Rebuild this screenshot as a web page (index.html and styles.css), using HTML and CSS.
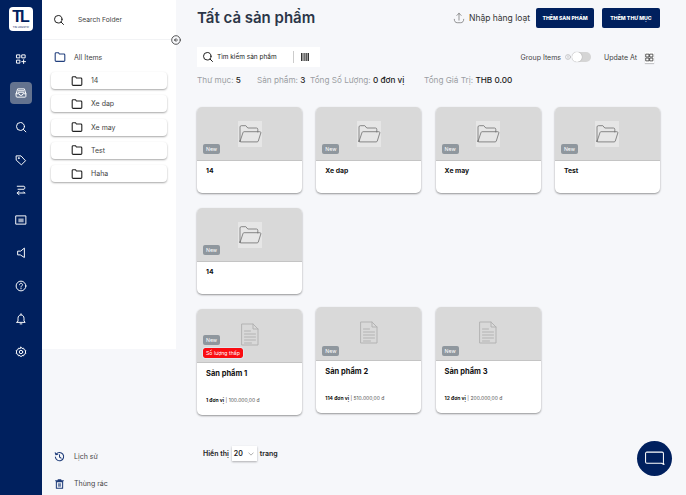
FILE: index.html
```html
<!DOCTYPE html>
<html lang="vi">
<head>
    <meta charset="UTF-8">
    <meta name="viewport" content="width=device-width, initial-scale=1.0">
    <title>Tất cả sản phẩm</title>
    <link rel="stylesheet" href="styles.css">
</head>
<body>
    <svg class="defs" width="0" height="0">
        <symbol id="folder" viewBox="0 0 12 12">
            <path d="M1.2 2.6c0-.5.4-.9.9-.9h2.3l1 1.3h4.5c.5 0 .9.4.9.9v5.6c0 .5-.4.9-.9.9H2.100c-.5 0-.9-.4-.9-.9z" fill="none" stroke="currentColor" stroke-width="1.100"/>
        </symbol>
        <symbol id="folder-open" viewBox="0 0 24 22">
            <path d="M2 18V4c0-.8.5-1.300 1.300-1.300h4.500l2 2.300h8.700c.8 0 1.300.5 1.300 1.300v2.700M2 18.500l3-9c.2-.5.5-.8 1.100-.8h15.700c.8 0 1.200.6 1 1.300l-2.500 8c-.2.6-.6.9-1.200.9H3c-.6 0-1-.3-1-.9z" fill="none" stroke="#6f6f6f" stroke-width=".8"/>
        </symbol>
        <symbol id="doc" viewBox="0 0 18 23">
            <path d="M1 1h11l5 5v16H1z" fill="none" stroke="#b3b3b3" stroke-width="1"/>
            <path d="M12 1v5h5M3.500 8h6M3.500 11h11M3.500 14h11M3.500 17h11M3.500 20h7" fill="none" stroke="#b3b3b3" stroke-width="1"/>
        </symbol>
    </svg>

    <nav class="rail">
        <div class="logo"><span class="logo-mark">TL</span><span class="logo-sub">TIN LOGISTIC</span></div>
        <a class="rail-item rail-item-wide">
            <svg viewBox="0 0 16 16"><path d="M2.500 2.500h4v4h-4zM9.500 2.500h4v4h-4zM2.500 9.500h4v4h-4zM11.500 9v5M9 11.500h5"/></svg>
        </a>
        <a class="rail-item rail-item-wide rail-item-active">
            <svg viewBox="0 0 16 16"><path d="M1.500 9l2-6.500h9l2 6.500v3.500c0 .6-.4 1-1 1h-11c-.6 0-1-.4-1-1zM1.500 9h4l1 2h3l1-2h4M4.500 5h7M4 7h8"/></svg>
        </a>
        <a class="rail-item">
            <svg viewBox="0 0 16 16"><circle cx="7.300" cy="7.300" r="5.300"/><path d="M11.200 11.200l3.300 3.300"/></svg>
        </a>
        <a class="rail-item rail-item-tight">
            <svg viewBox="0 0 16 16"><path d="M2 2.500h6l6 6.500-5.500 5.500L2 8.500z"/><circle cx="5" cy="5.500" r=".6"/></svg>
        </a>
        <a class="rail-item rail-item-tight">
            <svg viewBox="0 0 16 16"><path d="M3 3h9c1.500 0 1.500 4 0 4H4M13 12H3M5.500 9.500L3 12l2.500 2.500M13 12l-1.500-1.500"/></svg>
        </a>
        <a class="rail-item">
            <svg viewBox="0 0 16 16"><path d="M1.500 2.500h13v11h-13z"/><path class="solid" d="M4.500 6h7v5h-7z"/></svg>
        </a>
        <a class="rail-item">
            <svg viewBox="0 0 16 16"><path d="M12.500 2v12L7 10.500H3.500v-5H7z"/></svg>
        </a>
        <a class="rail-item">
            <svg viewBox="0 0 16 16"><circle cx="8" cy="8" r="6.500"/><path d="M6 6.300c0-1.200 1-1.900 2-1.900s2 .7 2 1.800c0 1.500-2 1.500-2 3.100M8 11v.8"/></svg>
        </a>
        <a class="rail-item">
            <svg viewBox="0 0 16 16"><path d="M2.500 12.500h11l-1.500-2V7c0-2.500-1.700-4.500-4-4.500S4 4.500 4 7v3.500zM8 1v1.500M6.800 14.500h2.400"/></svg>
        </a>
        <a class="rail-item">
            <svg viewBox="0 0 16 16"><path d="M8 1.500l1.300 1.800 2.200-.3.800 2.100 2.100.9-.6 2 .6 2-2.100.9-.8 2.100-2.200-.3L8 14.500l-1.300-1.800-2.200.3-.8-2.100-2.100-.9.6-2-.6-2 2.100-.9.8-2.100 2.200.3z"/><circle cx="8" cy="8" r="2.300"/></svg>
        </a>
    </nav>

    <aside class="panel">
        <div class="folder-box">
            <div class="folder-search">
                <svg class="search-icon" viewBox="0 0 16 16"><circle cx="7" cy="7" r="5"/><path d="M10.800 10.800l3.200 3.200"/></svg>
                <span>Search Folder</span>
            </div>
            <div class="all-items">
                <svg class="folder-navy"><use href="#folder"/></svg>
                <span>All Items</span>
            </div>
            <ul class="folder-list">
                <li><svg><use href="#folder"/></svg>14</li>
                <li><svg><use href="#folder"/></svg>Xe dap</li>
                <li><svg><use href="#folder"/></svg>Xe may</li>
                <li><svg><use href="#folder"/></svg>Test</li>
                <li><svg><use href="#folder"/></svg>Haha</li>
            </ul>
            <span class="collapse">
                <svg viewBox="0 0 10 10"><circle cx="5" cy="5" r="4.300"/><path d="M6.500 5H3.500M5 3.500L3.500 5 5 6.500"/></svg>
            </span>
        </div>
        <div class="panel-foot">
            <a>
                <svg viewBox="0 0 14 14"><path d="M2.800 3.200A5.300 5.300 0 1 1 1.700 7M1.500 1.500l.8 2.500 2.500-.4M7 4v3l2 1.500"/></svg>
                Lịch sử
            </a>
            <a>
                <svg viewBox="0 0 14 14"><path d="M3 4h8v8.500H3zM2 3h10M5.200 3V1.500h3.600V3"/><path class="solid" d="M5 6h4v4.500H5z"/></svg>
                Thùng rác
            </a>
        </div>
    </aside>

    <main class="main">
        <header class="top">
            <h1>Tất cả sản phẩm</h1>
            <div class="top-actions">
                <a class="import">
                    <svg viewBox="0 0 14 14"><path d="M1.500 8.500c0 2.500 1.300 4 3.500 4h4c2.200 0 3.500-1.500 3.500-4M7 9.500V1.500M4.500 4L7 1.500 9.500 4"/></svg>
                    Nhập hàng loạt
                </a>
                <button class="btn">THÊM SẢN PHẨM</button>
                <button class="btn">THÊM THƯ MỤC</button>
            </div>
        </header>

        <div class="tools">
            <div class="search-box">
                <svg class="search-icon" viewBox="0 0 16 16"><circle cx="7" cy="7" r="5"/><path d="M10.800 10.800l3.200 3.200"/></svg>
                <span class="search-text">Tìm kiếm sản phẩm</span>
                <span class="search-sep"></span>
                <svg class="barcode" viewBox="0 0 8 8"><path d="M0 0h1v8H0zM1.500 0h.5v8h-.5zM2.500 0h1.200v8H2.500zM4.200 0h.5v8h-.5zM5.200 0h1v8h-1zM6.700 0H8v8H6.700z"/></svg>
            </div>
            <div class="view-opts">
                <span>Group Items</span>
                <svg class="info" viewBox="0 0 8 8"><circle cx="4" cy="4" r="3.300"/><path d="M4 3.500v2.200M4 2.200v.6"/></svg>
                <span class="switch"><i></i></span>
                <span class="update">Update At</span>
                <span class="grid-btn"><svg viewBox="0 0 8 8"><path d="M1 1h2.500v2.500H1zM4.500 1H7v2.500H4.500zM1 4.500h2.500V7H1zM4.500 4.500H7V7H4.500z"/></svg></span>
            </div>
        </div>

        <div class="stats">
            <span class="s-folder">Thư mục: <b>5</b></span>
            <span class="s-product">Sản phẩm: <b>3</b></span>
            <span class="s-qty">Tổng Số Lượng: <b>0 đơn vị</b></span>
            <span class="s-value">Tổng Giá Trị: <b>THB 0.00</b></span>
        </div>

        <section class="cards">
            <article class="card">
                <div class="thumb"><span class="thumb-icon"><svg><use href="#folder-open"/></svg></span><div class="tags"><span class="tag">New</span></div></div>
                <div class="card-body"><h3>14</h3></div>
            </article>
            <article class="card">
                <div class="thumb"><span class="thumb-icon"><svg><use href="#folder-open"/></svg></span><div class="tags"><span class="tag">New</span></div></div>
                <div class="card-body"><h3>Xe dap</h3></div>
            </article>
            <article class="card">
                <div class="thumb"><span class="thumb-icon"><svg><use href="#folder-open"/></svg></span><div class="tags"><span class="tag">New</span></div></div>
                <div class="card-body"><h3>Xe may</h3></div>
            </article>
            <article class="card">
                <div class="thumb"><span class="thumb-icon"><svg><use href="#folder-open"/></svg></span><div class="tags"><span class="tag">New</span></div></div>
                <div class="card-body"><h3>Test</h3></div>
            </article>
            <article class="card">
                <div class="thumb"><span class="thumb-icon"><svg><use href="#folder-open"/></svg></span><div class="tags"><span class="tag">New</span></div></div>
                <div class="card-body"><h3>14</h3></div>
            </article>
        </section>

        <section class="cards products">
            <article class="card product product-low">
                <div class="thumb"><svg class="doc"><use href="#doc"/></svg><div class="tags"><span class="tag">New</span><span class="tag tag-red">Số lượng thấp</span></div></div>
                <div class="card-body"><h3>Sản phẩm 1</h3><p><b>1 đơn vị</b> | 100.000,00 đ</p></div>
            </article>
            <article class="card product">
                <div class="thumb"><svg class="doc"><use href="#doc"/></svg><div class="tags"><span class="tag">New</span></div></div>
                <div class="card-body"><h3>Sản phẩm 2</h3><p><b>114 đơn vị</b> | 510.000,00 đ</p></div>
            </article>
            <article class="card product">
                <div class="thumb"><svg class="doc"><use href="#doc"/></svg><div class="tags"><span class="tag">New</span></div></div>
                <div class="card-body"><h3>Sản phẩm 3</h3><p><b>12 đơn vị</b> | 200.000,00 đ</p></div>
            </article>
        </section>

        <div class="pager">
            <span>Hiển thị</span>
            <span class="page-size">20 <svg viewBox="0 0 8 5"><path d="M1 1l3 3 3-3"/></svg></span>
            <span>trang</span>
        </div>
    </main>

    <a class="chat">
        <svg viewBox="0 0 24 20"><path d="M3 2.500h18c.8 0 1.500.7 1.500 1.500v10c0 .3 0 .5-.2.8l.9 2.200-3-1.500H3c-.8 0-1.500-.7-1.500-1.500V4c0-.8.7-1.500 1.500-1.500z"/></svg>
    </a>
</body>
</html>
```

FILE: styles.css
```css
* {
    box-sizing: border-box;
}
html, body {
    height: 495px;
    overflow: hidden;
}
body {
    margin: 0;
    display: flex;
    font-family: Inter, "Noto Sans", sans-serif;
    color: #222;
    background-color: #f6f7fa;
}
svg {
    fill: none;
    stroke: currentColor;
    stroke-linecap: round;
    stroke-linejoin: round;
}
.defs {
    position: absolute;
}
h1, h3, p, ul {
    margin: 0;
    padding: 0;
}

/* left rail */
.rail {
    width: 42px;
    flex: none;
    display: flex;
    flex-direction: column;
    align-items: center;
    background-color: #00205e;
    color: #fff;
    padding-top: 7px;
}
.logo {
    width: 24px;
    height: 24px;
    margin-bottom: 17px;
    padding-top: 2px;
    border-radius: 4px;
    background-color: #fff;
    color: #00205e;
    display: flex;
    flex-direction: column;
    align-items: center;
}
.logo-mark {
    font-family: "Liberation Sans", sans-serif;
    font-weight: 700;
    font-size: 16px;
    line-height: 16px;
    letter-spacing: -2px;
    padding-right: 2px;
}
.logo-sub {
    margin-top: 1px;
    font-size: 2.500px;
    line-height: 3px;
    white-space: nowrap;
}
.rail-item {
    width: 22px;
    height: 22px;
    margin-bottom: 11px;
    border-radius: 4px;
    display: flex;
    align-items: center;
    justify-content: center;
}
.rail-item-wide {
    margin-bottom: 12px;
}
.rail-item-tight {
    margin-bottom: 8px;
}
.rail-item svg {
    width: 12px;
    height: 12px;
    stroke-width: 1.300;
}
.rail-item-active {
    background-color: #64738f;
}
.solid {
    fill: currentColor;
    stroke: none;
    opacity: .6;
}

/* folder panel */
.panel {
    width: 134px;
    flex: none;
    display: flex;
    flex-direction: column;
    justify-content: space-between;
}
.folder-box {
    position: relative;
    height: 349px;
    background-color: #fff;
}
.folder-search {
    height: 40px;
    padding: 0 0 0 11px;
    display: flex;
    align-items: center;
    gap: 13px;
    font-size: 6.700px;
    color: #444;
    border-bottom: 1px solid #f2f3f5;
}
.search-icon {
    width: 12px;
    height: 12px;
    flex: none;
    color: #1a1a1a;
    stroke-width: 1.300;
}
.all-items {
    display: flex;
    align-items: center;
    gap: 8px;
    padding: 6px 0 0 12px;
    height: 28px;
    font-size: 7px;
    color: #444;
}
.all-items svg {
    width: 12px;
    height: 12px;
}
.folder-navy {
    color: #23407e;
}
.folder-list {
    list-style: none;
    padding-left: 9px;
    margin-top: 4px;
}
.folder-list li {
    width: 116px;
    height: 17px;
    margin-bottom: 6.300px;
    padding-left: 20px;
    display: flex;
    align-items: center;
    gap: 8px;
    font-size: 7px;
    color: #444;
    background-color: #fff;
    border-radius: 4px;
    box-shadow: 0 1px 2px rgba(0, 0, 0, .35);
}
.folder-list svg {
    width: 12px;
    height: 12px;
    color: #222;
}
.collapse {
    position: absolute;
    top: 35px;
    left: 129px;
    width: 10px;
    height: 10px;
    color: #333;
    background-color: #f6f7fa;
    border-radius: 50%;
    display: flex;
}
.collapse svg {
    width: 10px;
    height: 10px;
    stroke-width: .8;
}
.panel-foot {
    padding: 0 0 5px 12px;
    display: flex;
    flex-direction: column;
    gap: 14px;
}
.panel-foot a {
    height: 13px;
    display: flex;
    align-items: center;
    gap: 9px;
    font-size: 7px;
    color: #444;
}
.panel-foot svg {
    width: 11px;
    height: 12px;
    color: #1c3a78;
    stroke-width: 1.300;
}

/* main area */
.main {
    flex: 1;
    min-width: 0;
    padding: 0 26px 0 21px;
}
.top {
    height: 34px;
    display: flex;
    justify-content: space-between;
    align-items: flex-start;
}
h1 {
    margin-top: 8px;
    font-size: 15px;
    line-height: 19px;
    font-weight: 600;
    color: #2c3648;
}
.top-actions {
    display: flex;
    align-items: center;
    margin-top: 8px;
    gap: 6px;
}
.import {
    display: flex;
    align-items: center;
    gap: 4px;
    font-size: 8.500px;
    color: #333;
}
.import svg {
    width: 12px;
    height: 12px;
    color: #666;
    stroke-width: .8;
}
.btn {
    width: 58px;
    height: 20px;
    padding: 0;
    border: 0;
    border-radius: 2px;
    background-color: #00205e;
    color: #fff;
    font-family: Inter, sans-serif;
    font-size: 5.200px;
    font-weight: 800;
    white-space: nowrap;
}
.btn + .btn {
    margin-left: 2px;
}
.tools {
    height: 20px;
    margin-top: 13px;
    display: flex;
    justify-content: space-between;
    align-items: flex-start;
}
.search-box {
    width: 123px;
    height: 20px;
    padding-left: 5px;
    display: flex;
    align-items: center;
    background-color: #fff;
}
.search-text {
    margin-left: 3px;
    width: 76px;
    font-size: 6.500px;
    color: #222;
}
.search-sep {
    width: 1px;
    height: 12px;
    background-color: #ccc;
}
.barcode {
    width: 8px;
    height: 8px;
    margin-left: 7px;
    fill: #333;
    stroke: none;
}
.view-opts {
    display: flex;
    align-items: center;
    height: 12px;
    margin-top: 4px;
    margin-right: 6px;
    font-size: 7px;
    color: #444;
}
.info {
    width: 6px;
    height: 6px;
    margin-left: 4px;
    stroke-width: .5;
    color: #888;
}
.switch {
    width: 19px;
    height: 10px;
    margin-left: 1px;
    border-radius: 5px;
    background-color: #d5d5d5;
    display: flex;
    align-items: center;
}
.switch i {
    width: 10px;
    height: 10px;
    border-radius: 50%;
    background-color: #fff;
    box-shadow: 0 0 1px rgba(0, 0, 0, .4);
}
.update {
    margin-left: 13px;
}
.grid-btn {
    width: 9px;
    height: 11px;
    margin-left: 8px;
    background-color: #fff;
    box-shadow: 0 1px 1px rgba(0, 0, 0, .2);
    display: flex;
    align-items: center;
}
.grid-btn svg {
    width: 9px;
    height: 9px;
    stroke-width: .7;
    color: #333;
}
.stats {
    height: 14px;
    margin-top: 6px;
    display: flex;
    align-items: center;
    font-size: 8.200px;
    color: #9b9ea3;
    white-space: nowrap;
}
.stats b {
    font-weight: 500;
    color: #222;
}
.s-folder {
    width: 60px;
}
.s-product {
    width: 53px;
}
.s-qty {
    width: 114px;
}

/* cards */
.cards {
    margin-top: 20px;
    display: grid;
    grid-template-columns: repeat(4, 105px);
    column-gap: 14.300px;
    row-gap: 15px;
}
.products {
    margin-top: 13px;
    align-items: start;
}
.card {
    height: 86px;
    border-radius: 5px;
    background-color: #fff;
    box-shadow: 0 1px 2px rgba(0, 0, 0, .4);
    overflow: hidden;
}
.thumb {
    position: relative;
    height: 54px;
    background-color: #d9d9d9;
    border-bottom: 1px solid #c4c4c4;
    display: flex;
    justify-content: center;
    padding-top: 14px;
}
.thumb-icon {
    width: 24px;
    height: 26px;
    background-color: #e6e6e6;
    display: flex;
    align-items: center;
}
.thumb-icon svg {
    width: 24px;
    height: 22px;
}
.tags {
    position: absolute;
    left: 6px;
    bottom: 6px;
    display: flex;
    flex-direction: column;
    align-items: flex-start;
    gap: 3px;
}
.tag {
    height: 10px;
    padding: 0 3px;
    border-radius: 2px;
    background-color: #8f979e;
    color: #fff;
    font-size: 5.200px;
    line-height: 10px;
}
.tag-red {
    background-color: #fa0d12;
    outline: 1px solid #dfe7ee;
    white-space: nowrap;
}
.card-body {
    padding: 5px 9px 0;
}
h3 {
    font-size: 6.800px;
    line-height: 10px;
    font-weight: 700;
    color: #111;
}
.product {
    height: 106px;
}
.product-low {
    margin-top: 2px;
}
.product .tags {
    bottom: 4px;
}
.product .doc {
    width: 18px;
    height: 23px;
    stroke-width: 1;
}
.product h3 {
    margin-top: 1px;
    margin-bottom: 18px;
    font-size: 7.500px;
}
.product p {
    font-size: 5px;
    color: #555;
    white-space: nowrap;
}
.product p b {
    color: #111;
}
.pager {
    margin-top: 31px;
    margin-left: 6px;
    display: flex;
    align-items: center;
    gap: 3px;
    font-size: 7px;
    font-weight: 600;
    color: #222;
}
.page-size {
    width: 25px;
    height: 15px;
    padding-left: 2px;
    display: flex;
    align-items: center;
    gap: 5px;
    background-color: #fff;
    box-shadow: 0 1px 2px rgba(0, 0, 0, .3);
}
.page-size svg {
    width: 6px;
    height: 4px;
    stroke-width: .7;
    color: #666;
}
.chat {
    position: absolute;
    left: 637px;
    top: 441px;
    width: 35px;
    height: 35px;
    border-radius: 50%;
    background-color: #00205e;
    color: #fff;
    display: flex;
    align-items: center;
    justify-content: center;
}
.chat svg {
    width: 21px;
    height: 17px;
    stroke-width: 1.200;
}
```
